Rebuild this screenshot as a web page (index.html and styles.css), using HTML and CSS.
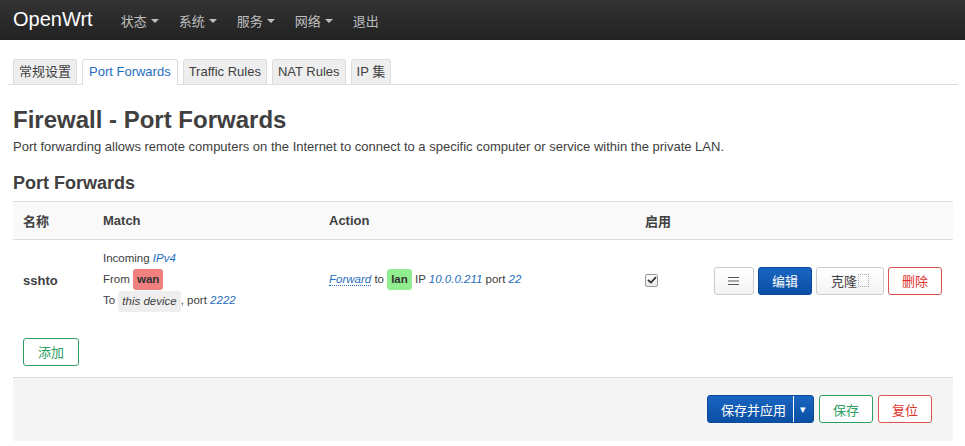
FILE: index.html
```html
<!DOCTYPE html>
<html lang="zh">
<head>
<meta charset="utf-8">
<title>OpenWrt - Firewall - Port Forwards</title>
<link rel="stylesheet" href="styles.css">
</head>
<body>
<header class="topbar">
  <a class="brand">OpenWrt</a>
  <nav class="nav">
    <span class="nav-item">状态<i class="caret"></i></span>
    <span class="nav-item">系统<i class="caret"></i></span>
    <span class="nav-item">服务<i class="caret"></i></span>
    <span class="nav-item">网络<i class="caret"></i></span>
    <span class="nav-item">退出</span>
  </nav>
</header>
<main class="container">
  <ul class="tabs">
    <li class="tab">常规设置</li>
    <li class="tab active">Port Forwards</li>
    <li class="tab">Traffic Rules</li>
    <li class="tab">NAT Rules</li>
    <li class="tab">IP 集</li>
  </ul>
  <h2 class="title">Firewall - Port Forwards</h2>
  <p class="desc">Port forwarding allows remote computers on the Internet to connect to a specific computer or service within the private LAN.</p>
  <h3 class="section">Port Forwards</h3>
  <table class="table">
    <thead>
      <tr>
        <th class="c-name">名称</th>
        <th class="c-match">Match</th>
        <th class="c-action">Action</th>
        <th class="c-en">启用</th>
        <th class="c-btn"></th>
      </tr>
    </thead>
    <tbody>
      <tr>
        <td class="name">sshto</td>
        <td class="small">
          <div class="line">Incoming <i class="val">IPv4</i></div>
          <div class="line">From <span class="zone z-wan">wan</span></div>
          <div class="line">To <span class="zone z-dev">this device</span>, port <i class="val">2222</i></div>
        </td>
        <td class="small"><i class="val dotted">Forward</i> to <span class="zone z-lan">lan</span> IP <i class="val">10.0.0.211</i> port <i class="val">22</i></td>
        <td><span class="check"><svg width="10" height="8" viewBox="0 0 10 8"><path d="M1 4 L4 6.6 L9 1.2" fill="none" stroke="#333" stroke-width="1.8"/></svg></span></td>
        <td class="btns">
          <span class="btn btn-plain"><svg width="11" height="10" viewBox="0 0 11 10"><path d="M0 1.5H11M0 5H11M0 8.5H11" stroke="#555" stroke-width="1.1"/></svg></span>
          <span class="btn btn-blue">编辑</span>
          <span class="btn btn-plain btn-clone">克隆<span class="miss"></span></span>
          <span class="btn btn-red">删除</span>
        </td>
      </tr>
    </tbody>
  </table>
  <div class="addrow"><span class="btn btn-green btn-add">添加</span></div>
  <div class="actions">
    <span class="btn btn-blue btn-apply">保存并应用<span class="split">▾</span></span>
    <span class="btn btn-green">保存</span>
    <span class="btn btn-red">复位</span>
  </div>
</main>
</body>
</html>
```
FILE: styles.css
```css
html, body {
  margin: 0;
  padding: 0;
  background: #fff;
  font-family: "Liberation Sans", Arial, "Noto Sans CJK SC", sans-serif;
  font-size: 13px;
  color: #404040;
}
.topbar {
  height: 40px;
  background: linear-gradient(#333, #222);
  display: flex;
  align-items: center;
  padding-left: 13px;
  box-sizing: border-box;
}
.brand {
  color: #fff;
  font-size: 20px;
  line-height: 40px;
  margin-top: -3px;
}
.nav {
  display: flex;
  margin-left: 28px;
  gap: 20px;
}
.nav-item {
  color: #bfbfbf;
  font-size: 13px;
  display: flex;
  align-items: center;
}
.caret {
  display: inline-block;
  width: 0;
  height: 0;
  margin-left: 4px;
  border-left: 4px solid transparent;
  border-right: 4px solid transparent;
  border-top: 4px solid #bfbfbf;
  margin-top: 1px;
}
.container {
  margin: 0 12px 0 13px;
}
.tabs {
  list-style: none;
  margin: 19px -5px 0 -5px;
  padding: 0 0 0 5px;
  display: flex;
  gap: 5px;
  border-bottom: 1px solid #ddd;
}
.tab {
  height: 24px;
  line-height: 24px;
  padding: 0 5px;
  border: 1px solid #ddd;
  border-bottom: none;
  border-radius: 3px 3px 0 0;
  background: #eee;
  color: #404040;
}
.tab.active {
  background: #fff;
  color: #1f6fc0;
  height: 25px;
  margin-bottom: -1px;
  padding: 0 6px;
}
.title {
  font-size: 24px;
  font-weight: bold;
  margin: 20px 0 0 0;
  line-height: 30px;
  color: #404040;
}
.desc {
  margin: 3px 0 0 0;
  line-height: 18px;
}
.section {
  font-size: 18px;
  font-weight: bold;
  margin: 16px 0 0 0;
  line-height: 22px;
}
.table {
  width: 100%;
  border-collapse: collapse;
  table-layout: fixed;
  margin-top: 7px;
}
.table th {
  box-sizing: border-box;
  background: #f9f9f9;
  border-top: 1px solid #ddd;
  border-bottom: 1px solid #ddd;
  height: 38px;
  text-align: left;
  padding: 0 10px;
  font-weight: bold;
  font-size: 13px;
}
.c-name { width: 80px; }
.c-match { width: 226px; }
.c-action { width: 316px; }
.c-en { width: 50px; }
.table td {
  padding: 8px 10px;
  vertical-align: middle;
}
.table td.name {
  font-weight: bold;
  font-size: 13px;
  padding-top: 10px;
}
.small {
  font-size: 11.5px;
}
.line {
  line-height: 21px;
}
.val {
  color: #1f6fc0;
}
.dotted {
  border-bottom: 1px dotted #1f6fc0;
}
.zone {
  display: inline-block;
  padding: 0 4px;
  line-height: 21px;
  border-radius: 3px;
  vertical-align: middle;
}
.z-wan {
  background: #f08080;
  font-weight: bold;
  color: #333;
}
.z-lan {
  background: #90ee90;
  font-weight: bold;
  color: #333;
}
.z-dev {
  background: #eee;
  font-style: italic;
  color: #404040;
}
.check {
  display: inline-flex;
  align-items: center;
  justify-content: center;
  width: 11px;
  height: 11px;
  border: 1px solid #999;
  border-radius: 2px;
  background: linear-gradient(#fff, #e9e9e9);
}
.btns {
  text-align: right;
  white-space: nowrap;
  font-size: 0;
}
.table td.btns { padding-right: 11px; padding-top: 10px; }
.btn {
  display: inline-flex;
  align-items: center;
  justify-content: center;
  box-sizing: border-box;
  height: 28px;
  padding: 0 13px;
  border: 1px solid #ccc;
  border-radius: 3px;
  font-size: 13px;
  background: #fff;
  color: #404040;
  vertical-align: middle;
}
.btns .btn { margin-left: 4px; }
.btn-plain {
  background: linear-gradient(#fff, #f3f3f3);
  border-color: #ccc;
  min-width: 40px;
}
.btn-blue {
  background: linear-gradient(#1a65c2, #0a4fa3);
  border-color: #0a4a9a;
  color: #fff;
}
.btn-red {
  border-color: #d9534f;
  color: #e0322b;
}
.btn-green {
  border-color: #2e9e62;
  color: #2e9e62;
}
.btn-clone { padding: 0 14px 0 14px; }
.miss {
  display: inline-block;
  width: 9px;
  height: 11px;
  border: 1px dotted #aaa;
  margin-left: 1px;
}
.addrow {
  padding: 18px 10px 11px 10px;
}
.btn-add {
  width: 56px;
  height: 28px;
}
.actions {
  background: #f5f5f5;
  border-top: 1px solid #ddd;
  height: 63px;
  display: flex;
  justify-content: flex-end;
  align-items: center;
  gap: 5px;
  padding: 0 21px 0 0;
}
.btn-apply {
  padding: 0 0 0 13px;
}
.split {
  display: inline-flex;
  align-items: center;
  justify-content: center;
  height: 26px;
  width: 19px;
  margin-left: 7px;
  border-left: 1px solid #fff;
  font-size: 11px;
}
```
